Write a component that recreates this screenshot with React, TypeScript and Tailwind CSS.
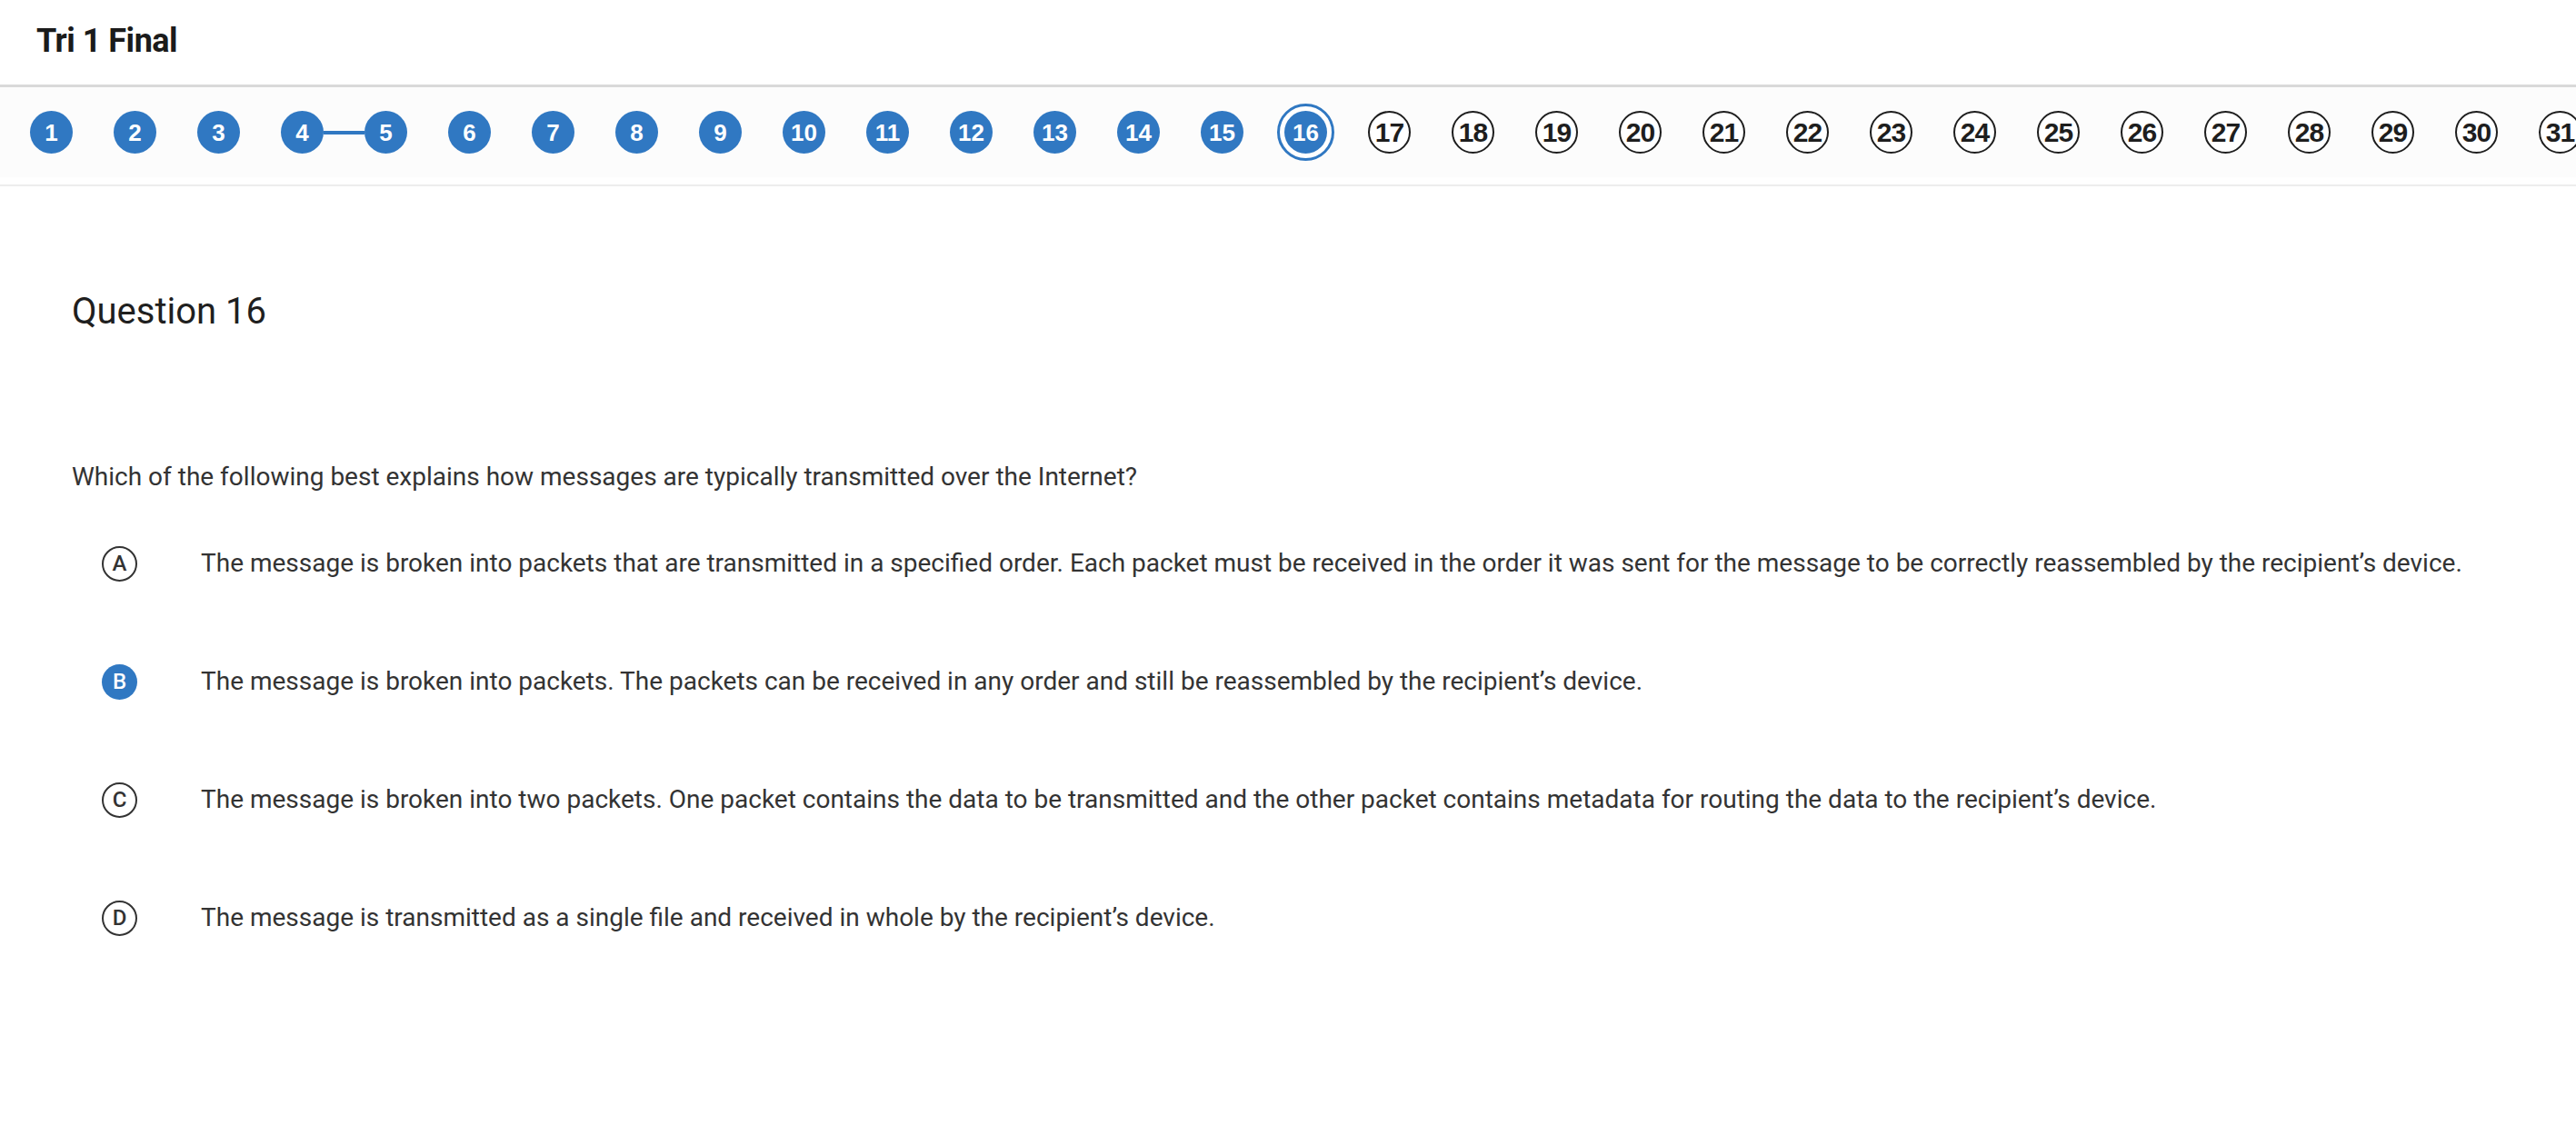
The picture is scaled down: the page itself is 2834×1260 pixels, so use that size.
const answered = Array.from({ length: 15 }, (_, i) => i + 1);
const current = 16;
const total = 31;

const options = [
  {
    letter: "A",
    text: "The message is broken into packets that are transmitted in a specified order. Each packet must be received in the order it was sent for the message to be correctly reassembled by the recipient’s device.",
  },
  {
    letter: "B",
    text: "The message is broken into packets. The packets can be received in any order and still be reassembled by the recipient’s device.",
    selected: true,
  },
  {
    letter: "C",
    text: "The message is broken into two packets. One packet contains the data to be transmitted and the other packet contains metadata for routing the data to the recipient’s device.",
  },
  {
    letter: "D",
    text: "The message is transmitted as a single file and received in whole by the recipient’s device.",
  },
];

const NavDot = ({ n }: { n: number }) => {
  if (n === current) {
    return (
      <div className="w-[47px] h-[47px] flex items-center justify-center shrink-0">
        <div className="w-[63px] h-[63px] shrink-0 rounded-full border-[3px] border-[#3078c2] p-[5px] bg-white">
          <div className="w-full h-full rounded-full bg-[#3078c2] flex items-center justify-center text-white text-[26px] font-bold font-['Liberation_Sans',sans-serif] leading-none">
            {n}
          </div>
        </div>
      </div>
    );
  }
  if (answered.includes(n)) {
    return (
      <div className="w-[47px] h-[47px] shrink-0 rounded-full bg-[#3078c2] flex items-center justify-center text-white text-[26px] font-bold font-['Liberation_Sans',sans-serif] leading-none">
        {n}
      </div>
    );
  }
  return (
    <div className="w-[47px] h-[47px] shrink-0 rounded-full border-2 border-[#1e1e1e] bg-white flex items-center justify-center text-[#1e1e1e] text-[30px] font-bold font-['Liberation_Sans',sans-serif] leading-none tracking-[-1px]">
      {n}
    </div>
  );
};

const App = () => {
  const dots = Array.from({ length: total }, (_, i) => i + 1);
  return (
    <div className="w-[2834px] min-h-[1260px] bg-white font-['Roboto',sans-serif] overflow-hidden">
      {/* title bar */}
      <div className="h-[93px] flex items-center px-[40px] pb-[4px]">
        <h1 className="text-[36px] font-bold leading-none text-[#1b1b1b] tracking-[-0.5px]">
          Tri 1 Final
        </h1>
      </div>
      <div className="h-[3px] bg-[#d9d9d9]" />

      {/* question navigator */}
      <div className="h-[99px] bg-[#fcfcfc] flex items-center pl-[33px] overflow-hidden">
        {dots.map((n) => (
          <div key={n} className="flex items-center shrink-0">
            <NavDot n={n} />
            {n < total && (
              <div className="w-[45px] flex items-center">
                {n === 4 && <div className="h-[4px] w-full bg-[#3078c2]" />}
              </div>
            )}
          </div>
        ))}
      </div>
      <div className="h-[8px]" />
      <div className="h-[2px] bg-[#ededed]" />

      {/* question body */}
      <div className="px-[79px]">
        <h2 className="mt-[118px] text-[40px] leading-none font-normal text-[#1f1f1f]">
          Question 16
        </h2>
        <p className="mt-[148px] text-[28px] leading-none text-[#333333]">
          Which of the following best explains how messages are typically transmitted over the Internet?
        </p>

        <div className="mt-[16px] flex flex-col">
          {options.map((o) => (
            <div key={o.letter} className="h-[130px] flex items-center pl-[33px]">
              <div
                className={
                  o.selected
                    ? "w-[39px] h-[39px] shrink-0 rounded-full bg-[#3078c2] flex items-center justify-center text-white text-[24px] font-medium leading-none"
                    : "w-[39px] h-[39px] shrink-0 rounded-full border-2 border-[#333333] flex items-center justify-center text-[#333333] text-[24px] font-medium leading-none"
                }
              >
                {o.letter}
              </div>
              <p className="ml-[70px] text-[28px] leading-none text-[#333333]">{o.text}</p>
            </div>
          ))}
        </div>
      </div>
    </div>
  );
};

export default App;
